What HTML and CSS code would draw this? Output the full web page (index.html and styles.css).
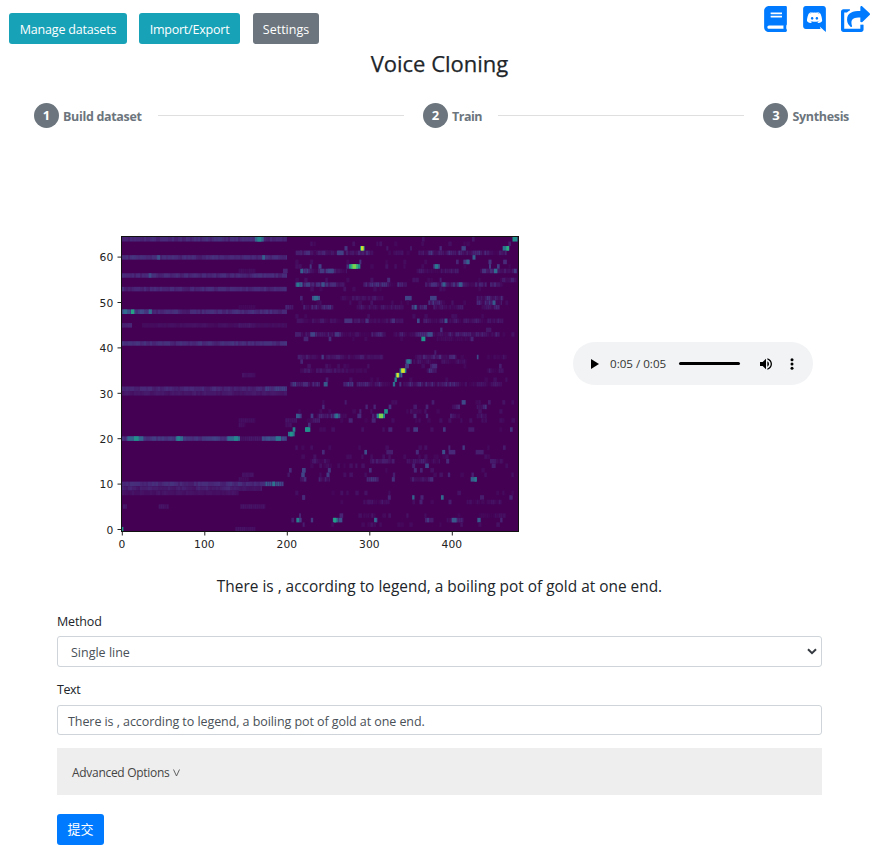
FILE: index.html
```html
<!DOCTYPE html>
<html lang="en">
<head>
<meta charset="utf-8">
<title>Voice Cloning</title>
<link rel="stylesheet" href="styles.css">
</head>
<body>
<header class="topbar">
  <nav class="actions">
    <button class="btn info manage">Manage datasets</button>
    <button class="btn info import">Import/Export</button>
    <button class="btn secondary settings">Settings</button>
  </nav>
  <div class="links">
    <svg class="book" viewBox="0 0 448 512"><path d="M448 360V24c0-13.300-10.700-24-24-24H96C43 0 0 43 0 96v320c0 53 43 96 96 96h328c13.300 0 24-10.700 24-24v-16c0-7.500-3.500-14.300-8.900-18.700-4.200-15.400-4.200-59.300 0-74.700 5.400-4.300 8.900-11.100 8.900-18.600zM128 134c0-3.300 2.700-6 6-6h212c3.300 0 6 2.700 6 6v20c0 3.300-2.700 6-6 6H134c-3.300 0-6-2.700-6-6v-20zm0 64c0-3.300 2.700-6 6-6h212c3.300 0 6 2.700 6 6v20c0 3.300-2.700 6-6 6H134c-3.300 0-6-2.700-6-6v-20zm253.400 250H96c-17.700 0-32-14.300-32-32 0-17.600 14.400-32 32-32h285.400c-1.900 17.100-1.900 46.900 0 64z"/></svg>
    <svg class="discord" viewBox="0 0 448 512"><path d="M297.216 243.200c0 15.616-11.520 28.416-26.112 28.416-14.336 0-26.112-12.800-26.112-28.416s11.520-28.416 26.112-28.416c14.592 0 26.112 12.800 26.112 28.416zm-119.552-28.416c-14.592 0-26.112 12.800-26.112 28.416s11.776 28.416 26.112 28.416c14.592 0 26.112-12.800 26.112-28.416.256-15.616-11.520-28.416-26.112-28.416zM448 52.736V512c-64.494-56.994-43.868-38.128-118.784-107.776l13.568 47.360H52.480C23.552 451.584 0 428.032 0 398.848V52.736C0 23.552 23.552 0 52.480 0h343.040C424.448 0 448 23.552 448 52.736zm-72.960 242.688c0-82.432-36.864-149.248-36.864-149.248-36.864-27.648-71.936-26.880-71.936-26.880l-3.584 4.096c43.520 13.312 63.744 32.512 63.744 32.512-60.811-33.329-132.244-33.335-191.232-7.424-9.472 4.352-15.104 7.424-15.104 7.424s21.248-20.224 67.328-33.536l-2.560-3.072s-35.072-.768-71.936 26.880c0 0-36.864 66.816-36.864 149.248 0 0 21.504 37.120 78.080 38.912 0 0 9.472-11.520 17.152-21.248-32.512-9.728-44.800-30.208-44.800-30.208 3.766 2.636 9.976 6.053 10.496 6.400 43.210 24.198 104.588 32.126 159.744 8.960 8.960-3.328 18.944-8.192 29.440-15.104 0 0-12.800 20.992-46.336 30.464 7.680 9.728 16.896 20.736 16.896 20.736 56.576-1.792 78.336-38.912 78.336-38.912z"/></svg>
    <svg class="share" viewBox="0 0 576 512"><path d="M568.482 177.448L424.479 313.433C409.300 327.768 384 317.140 384 295.985v-71.963c-144.575.970-205.566 35.113-164.775 171.353 4.483 14.973-12.846 26.567-25.006 17.330C155.252 383.105 120 326.488 120 269.339c0-143.937 117.599-172.500 264-173.312V24.012c0-21.174 25.317-31.768 40.479-17.448l144.003 135.988c10.020 9.463 10.028 25.425 0 34.896zM384 379.128V448H64V128h50.916a11.990 11.990 0 0 0 8.648-3.693c14.953-15.568 32.237-27.890 51.014-37.676C185.708 80.830 181.584 64 169.033 64H48C21.490 64 0 85.490 0 112v352c0 26.510 21.490 48 48 48h352c26.510 0 48-21.490 48-48v-88.806c0-8.288-8.197-14.066-16.011-11.302a71.830 71.830 0 0 1-34.189 3.377c-7.270-1.046-13.800 4.514-13.800 11.859z"/></svg>
  </div>
</header>

<h1>Voice Cloning</h1>

<div class="stepper">
  <div class="step"><span class="num">1</span><span class="s1">Build dataset</span></div>
  <div class="line"></div>
  <div class="step"><span class="num">2</span><span class="s2">Train</span></div>
  <div class="line"></div>
  <div class="step"><span class="num">3</span><span class="s3">Synthesis</span></div>
</div>

<main>
  <div class="result">
    <svg class="chart" viewBox="0 0 435 330">
      <rect x="32" y="7" width="396" height="294.500" fill="#440154"/>
      <g id="cells"></g>
      <rect x="31.500" y="6.500" width="397" height="295" fill="none" stroke="#111" stroke-width="1"/>
      <g id="ticks"></g>
    </svg>
    <div class="audio">
      <svg class="play" viewBox="0 0 8 10"><path d="M0 0l8 5-8 5z"/></svg>
      <span class="time">0:05 / 0:05</span>
      <div class="track"></div>
      <svg class="volume" viewBox="3 3 18 18"><path d="M3 9v6h4l5 5V4L7 9H3zm13.500 3A4.500 4.500 0 0 0 14 7.970v8.050c1.480-.730 2.500-2.250 2.500-4.020zM14 3.230v2.060c2.890.860 5 3.540 5 6.710s-2.110 5.850-5 6.710v2.060c4.010-.910 7-4.490 7-8.770s-2.990-7.860-7-8.770z"/></svg>
      <svg class="more" viewBox="0 0 4 12"><circle cx="2" cy="1.700" r="1.500"/><circle cx="2" cy="6" r="1.500"/><circle cx="2" cy="10.300" r="1.500"/></svg>
    </div>
  </div>
  <p class="caption"><span>There is , according to legend, a boiling pot of gold at one end.</span></p>
  <div class="form">
    <label class="l1">Method</label>
    <div class="control select"><span>Single line</span>
      <svg viewBox="0 0 10 7"><path d="M1 1.200l4 3.900 4-3.900" fill="none" stroke="#343a40" stroke-width="2"/></svg>
    </div>
    <label class="l2">Text</label>
    <div class="control input"><span>There is , according to legend, a boiling pot of gold at one end.</span></div>
    <div class="advanced"><span>Advanced Options</span> <svg viewBox="0 0 7 8"><path d="M.5.500l3 6.500 3-6.500" fill="none" stroke="#555" stroke-width=".9"/></svg></div>
    <button class="btn primary">提交</button>
  </div>
</main>
<script src="chart.js"></script>
</body>
</html>
```
FILE: styles.css
```css
* { box-sizing: border-box; }
body {
  margin: 0;
  width: 870px;
  height: 860px;
  overflow: hidden;
  background: #fff;
  color: #212529;
  font: 12.5px/19px "Open Sans", "Noto Sans CJK SC", sans-serif;
}
.topbar { display: flex; justify-content: space-between; height: 44px; padding: 6px 0 0 9px; }
.actions { display: flex; padding-top: 7px; }
.btn {
  height: 31px;
  border: 0;
  border-radius: 3px;
  padding: 2px 0 0;
  color: #fff;
  font: inherit;
  text-align: center;
  white-space: nowrap;
}
.info { background: #17a2b8; }
.secondary { background: #6c757d; }
.primary { background: #007bff; width: 47px; font-size: 13px; padding: 0; }
.manage { width: 118px; margin-right: 12px; letter-spacing: -.18px; }
.import { width: 101px; margin-right: 13px; letter-spacing: -.22px; }
.settings { width: 66px; }
.links { display: flex; fill: #007bff; }
.links svg { height: 26px; }
.book { width: 23px; margin-right: 16px; }
.discord { width: 23px; margin-right: 15px; }
.share { width: 29px; }
h1 {
  margin: 5px 0 0;
  padding-left: 9px;
  font-size: 22px;
  line-height: 28px;
  font-weight: 500;
  -webkit-text-stroke: .25px #212529;
  text-align: center;
}
.stepper {
  display: flex;
  align-items: center;
  height: 26px;
  margin: 25px 21px 0 34px;
  color: #6c757d;
  font-weight: 700;
}
.step { display: flex; align-items: center; white-space: nowrap; }
.step span:last-child { padding-top: 2px; }
.s1 { letter-spacing: -.33px; }
.s2 { letter-spacing: -.5px; }
.s3 { letter-spacing: -.33px; }
.num {
  width: 25px;
  height: 25px;
  margin-right: 4px;
  border-radius: 50%;
  background: #6c757d;
  color: #fff;
  font-size: 13px;
  line-height: 25px;
  text-align: center;
}
.line { flex: 1; height: 1px; margin: 0 19px 0 16px; background: #dfdfdf; }
.result { display: flex; height: 330px; margin-top: 102px; padding-left: 90px; }
.chart { width: 435px; height: 330px; font: 10.700px "DejaVu Sans", sans-serif; }
.audio {
  display: flex;
  align-items: center;
  width: 240px;
  height: 43px;
  margin: 112px 0 0 48px;
  padding-left: 18px;
  border-radius: 22px;
  background: #f1f3f4;
}
.play { width: 8px; height: 10px; }
.time { width: 56px; margin: 0 13px 0 11px; font: 11.600px "Open Sans", sans-serif; white-space: nowrap; color: #333; }
.track { width: 61px; height: 3px; border-radius: 2px; background: #000; }
.volume { width: 12px; height: 12px; margin-left: 20px; }
.more { width: 4px; height: 12px; margin-left: 18px; }
.caption { margin: 15px 0 0; padding-left: 9px; font-size: 15.420px; line-height: 24px; text-align: center; white-space: nowrap; }
.form { display: flex; flex-direction: column; width: 765px; margin: 12px 0 0 57px; }
label { height: 25px; letter-spacing: -.15px; }
.l1 { padding-top: 1px; }
.control {
  display: flex;
  align-items: center;
  border: 1px solid #ced4da;
  border-radius: 3px;
  color: #495057;
}
.select { height: 31px; padding: 2px 4px 0 13px; justify-content: space-between; margin-bottom: 12px; }
.select svg { width: 10px; height: 7px; margin-top: -3px; }
.input { height: 30px; padding: 2px 0 0 10px; letter-spacing: -.07px; }
.l2 { height: 26px; padding-top: 1px; letter-spacing: -.4px; }
.advanced {
  display: flex;
  align-items: center;
  height: 47px;
  margin: 13px 0 19px;
  padding: 2px 0 0 15px;
  background: #eee;
  color: #444;
  font-size: 12px;
  letter-spacing: -.3px;
}
.advanced svg { width: 7px; height: 8px; margin-left: 4px; }
```
FILE: chart.js
```js
const NS = 'http://www.w3.org/2000/svg';
const stops = [[68,1,84],[72,40,120],[62,74,137],[49,104,142],[38,130,142],[31,158,137],[53,183,121],[109,205,89],[180,222,44],[253,231,37]];
function viridis(v) {
  const p = Math.min(Math.max(v, 0), 0.999) * 9, i = Math.floor(p), f = p - i;
  return 'rgb(' + stops[i].map((c, k) => Math.round(c + (stops[i + 1][k] - c) * f)).join(',') + ')';
}
let seed = 11;
function rand() { seed = (seed * 16807) % 2147483647; return seed / 2147483647; }

// Each entry is [row, start, end, level]; horizontal units are thirds of a pixel.
const bands = [
  [64,0,495,.14],[60,0,495,.14],[56,0,495,.13],[53,0,495,.13],[48,0,495,.14],[48,0,90,.23],[45,0,30,.1],[45,60,495,.045],[45,350,400,.08],
  [41,0,495,.15],[31,0,495,.12],[31,430,495,.2],[30,0,495,.08],[20,0,350,.18],[20,350,420,.08],[20,420,495,.23],
  [10,0,430,.15],[10,430,485,.3],[9,0,420,.1],[8,0,350,.06],[9,350,420,.08],[5,355,430,.06],[5,110,140,.06],[5,3,15,.08],[0,340,400,.05],
  [57,350,400,.04],[49,350,400,.03],[34,360,400,.05],[24,350,400,.05],[23,350,370,.05],[12,360,395,.05],[11,350,380,.04],
  [61,534,744,.1],[61,814,844,.06],[61,889,1095,.12],[61,1095,1154,.07],[57,534,674,.14],[57,884,1010,.06],[57,1074,1184,.13],
  [55,1134,1184,.07],[54,534,670,.16],[54,724,854,.14],[54,909,1094,.13],[54,1104,1144,.14],[51,654,784,.05],[51,1064,1144,.13],
  [50,919,964,.13],[50,1064,1140,.12],[49,490,514,.1],[49,544,634,.14],[49,704,844,.07],[49,869,914,.18],[49,934,1024,.06],[49,1079,1134,.1],
  [46,534,844,.05],[46,904,1144,.06],[43,520,784,.09],[43,814,1134,.09],[38,534,784,.06],[38,879,1004,.1],[38,1094,1154,.07],
  [37,874,1034,.06],[36,924,944,.1],[35,534,734,.05],[35,914,944,.13],[35,1094,1144,.06],[32,505,594,.12],[32,664,694,.14],[32,704,804,.11],[32,844,1034,.1],[32,1040,1140,.05],
  [27,874,884,.1],[27,990,1014,.16],[27,1064,1094,.12],[25,584,674,.12],[25,750,766,.2],[25,984,1014,.1],[25,1064,1094,.1],
  [24,554,594,.07],[24,490,525,.06],[23,490,510,.06],[15,564,624,.06],[15,744,819,.06],[15,854,954,.08],[15,1104,1144,.07],
  [14,604,630,.06],[11,534,554,.1],[11,590,624,.08],[11,734,770,.12],[11,864,934,.08],[6,724,804,.06],[6,1034,1139,.06],
  [3,724,760,.05],[3,1070,1140,.05],[2,909,934,.12],[2,974,1024,.12],[42,944,1050,.03],[26,864,894,.05]
];
// Bright marks: [row, centre, width, level].
const marks = [
  [64,412,26,.32],[64,412,12,.47],[60,425,9,.3],[60,110,9,.25],[56,84,9,.23],[48,32,10,.58],[48,10,12,.35],[48,85,9,.35],
  [20,40,48,.32],[20,43,14,.5],[20,172,22,.35],[20,170,9,.45],[20,335,38,.34],[20,342,12,.46],[20,469,16,.39],[10,455,8,.38],
  [0,2,4,.55],[61,530,18,.08],[57,490,14,.1],[57,539,8,.3],[57,552,8,.12],[54,528,15,.2],[54,528,9,.4],[51,538,8,.1],[46,533,18,.05],[43,528,18,.08],[38,531,8,.08],[37,539,8,.1],[32,550,14,.12],
  [25,528,12,.28],[22,516,8,.45],[21,508,20,.38],[21,508,8,.52],[22,557,16,.5],[13,505,8,.12],[13,546,9,.25],[12,543,9,.22],[12,500,7,.06],[7,545,8,.12],[2,528,10,.43],[2,512,8,.08],[3,534,6,.1],
  [64,1179,15,.5],[64,904,8,.05],[64,1054,8,.06],[63,1163,8,.08],[62,721,14,.5],[62,721,8,.93],[62,672,9,.15],[62,796,6,.06],[62,867,6,.06],[62,956,7,.11],[62,1025,13,.2],[62,1152,20,.4],[62,1157,8,.62],
  [61,655,20,.19],[60,1056,9,.3],[59,1034,20,.17],[59,1037,8,.3],[59,715,6,.14],[59,1104,9,.15],[59,1149,11,.12],[59,1006,8,.1],
  [58,566,6,.16],[58,594,9,.2],[58,677,7,.13],[58,698,34,.5],[58,697,22,.65],[58,697,11,.8],[58,944,20,.2],[58,944,10,.4],[58,1104,6,.18],[58,1129,8,.18],[57,1121,10,.34],[57,625,15,.21],
  [55,800,9,.12],[55,956,6,.08],[54,538,7,.3],[54,603,10,.25],[54,966,9,.3],[54,1015,9,.3],[51,582,24,.25],[51,582,12,.35],[51,859,20,.2],[51,934,20,.19],[50,1116,9,.28],[49,881,6,.3],
  [46,679,24,.14],[46,735,10,.14],[46,814,10,.13],[46,889,8,.22],[46,972,9,.25],[44,958,7,.14],[44,1100,16,.06],[43,572,14,.2],[43,645,14,.16],[43,924,16,.24],[42,904,12,.52],[42,624,8,.13],[42,552,14,.1],[42,1050,9,.1],
  [39,940,6,.08],[38,602,7,.17],[38,1067,5,.22],[37,860,18,.25],[37,860,9,.4],[36,855,12,.15],[36,938,15,.12],[36,1135,8,.08],
  [35,843,20,.45],[35,843,11,.94],[34,827,13,.5],[34,827,7,.95],[34,838,6,.3],[33,821,7,.46],[32,816,7,.36],[32,835,6,.15],[32,611,12,.28],[33,615,8,.08],
  [28,1025,12,.22],[28,933,8,.08],[28,671,6,.07],[28,1102,8,.07],[27,604,7,.12],[27,734,7,.1],[27,758,7,.1],[27,804,8,.14],[27,915,8,.1],[26,792,11,.52],[26,715,6,.1],
  [25,777,24,.48],[25,777,12,.8],[25,536,6,.18],[25,570,8,.18],[25,645,20,.22],[25,644,8,.38],[25,712,12,.12],[25,879,9,.12],[25,915,7,.12],[24,686,12,.1],[24,755,12,.1],[23,562,8,.12],
  [22,557,11,.5],[22,805,12,.1],[22,881,14,.17],[22,967,8,.16],[22,1048,18,.07],[22,1168,8,.15],[18,1025,7,.17],[18,982,6,.1],[18,1147,8,.07],[17,604,8,.12],[17,731,8,.24],[17,803,20,.08],[17,886,9,.12],[17,965,9,.24],[17,990,20,.11],[17,1073,24,.08],
  [15,977,9,.12],[14,915,11,.22],[14,875,9,.09],[14,1115,12,.09],[13,545,10,.2],[13,622,9,.16],[13,745,8,.13],[13,880,9,.12],[13,898,8,.1],[12,543,9,.2],[12,618,9,.18],[12,816,7,.08],[12,981,7,.1],[12,1052,7,.09],[11,814,9,.14],[11,1055,18,.3],[11,1061,7,.4],
  [7,545,9,.12],[7,802,9,.1],[7,874,7,.32],[7,900,9,.1],[7,961,8,.34],[7,1080,12,.08],[7,1167,10,.1],[6,897,9,.09],[6,984,9,.08],[3,658,11,.1],[2,536,6,.17],[2,570,7,.17],[2,640,15,.4],[2,638,8,.57],[2,655,12,.25],[2,761,10,.25],[2,760,5,.36],[2,997,14,.27],[2,1071,10,.28],[2,1138,7,.1],[1,545,6,.08]
];
const cells = document.getElementById('cells');
function cell(row, x, w, v) {
  const r = document.createElementNS(NS, 'rect');
  r.setAttribute('x', 32 + x / 3);
  r.setAttribute('y', 7 + (64 - row) * 4.530);
  r.setAttribute('width', w / 3);
  r.setAttribute('height', 4.530);
  r.setAttribute('fill', viridis(v));
  cells.append(r);
}
bands.forEach(([row, a, b, v]) => {
  const sparse = a > 500;
  let shade = sparse ? .6 : 1;
  for (let x = a; x < b; x += 6) {
    const next = sparse ? Math.pow(rand(), 1.8) * 2.1 : .5 + rand() * .8;
    shade = shade * .4 + next * .6;
    cell(row, x, Math.min(6, b - x), v * shade * .88);
  }
});
marks.forEach(([row, c, w, v]) => cell(row, c - w / 2, w, v));

// Faint speckle over the right-hand part of the spectrum.
[63,61,59,58,55,53,50,47,43,42,38,36,33,28,26,24,22,18,16,14,13,12,8,6,3,1].forEach(row => {
  for (let x = 520; x < 1170; x += 9) {
    if (rand() > .86 && !marks.some(m => m[0] === row && Math.abs(m[1] - x) < 24)) {
      cell(row, x, 6 + rand() * 5, .015 + rand() * .035);
    }
  }
});

const ticks = document.getElementById('ticks');
function tick(x1, y1, x2, y2, label, tx, ty, anchor) {
  const l = document.createElementNS(NS, 'path');
  l.setAttribute('d', `M${x1} ${y1}L${x2} ${y2}`);
  l.setAttribute('stroke', '#222');
  const t = document.createElementNS(NS, 'text');
  t.setAttribute('x', tx);
  t.setAttribute('y', ty);
  t.setAttribute('text-anchor', anchor);
  t.setAttribute('fill', '#222');
  t.textContent = label;
  ticks.append(l, t);
}
for (let v = 0; v <= 60; v += 10) {
  const y = 299.500 - v * 4.540;
  tick(27.500, y, 31.500, y, v, 23.200, y + 4.200, 'end');
}
for (let v = 0; v <= 400; v += 100) {
  const x = 32.300 + v * .825;
  tick(x, 301.500, x, 305.500, v, x - .5, 318.400, 'middle');
}
```
